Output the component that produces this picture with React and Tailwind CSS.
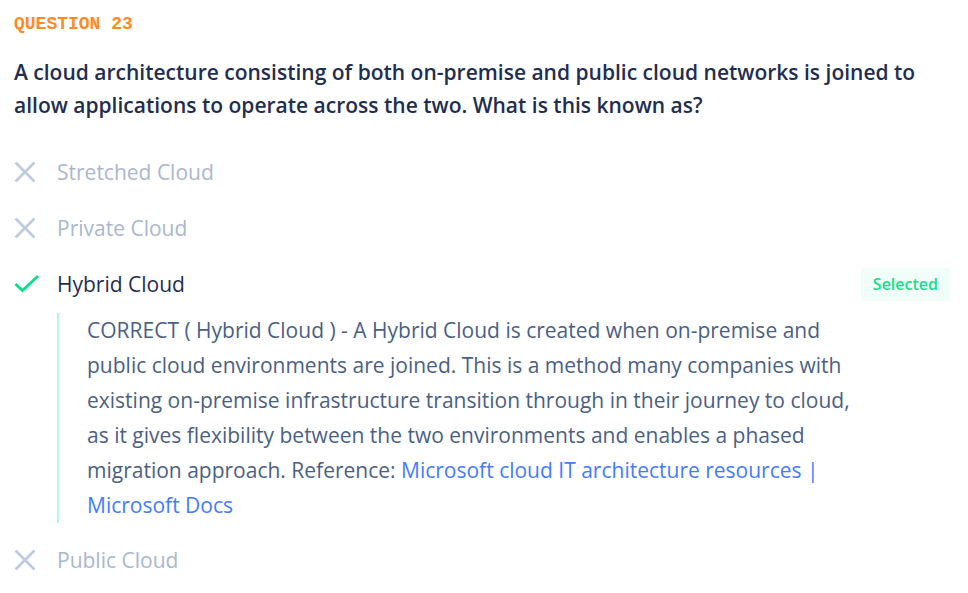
const Cross = () => (
  <svg className="h-6 w-6 shrink-0 text-[#bec9e4]" viewBox="0 0 24 24" fill="none" stroke="currentColor" strokeWidth="2.5" aria-hidden="true">
    <path d="M1.5 1.5 20.5 20.5M20.5 1.5 1.5 20.5" />
  </svg>
);

const Check = () => (
  <svg className="h-6 w-6 shrink-0 overflow-visible text-[#06e187]" viewBox="0 0 24 24" fill="none" stroke="currentColor" strokeWidth="2.8" aria-hidden="true">
    <path d="M1.5 11 8.5 17.5 24 3" />
  </svg>
);

const Option = ({ children }) => (
  <li className="mb-[23px] flex items-center gap-[19px] leading-[33px] text-[#aab7cf]">
    <Cross />
    <span>{children}</span>
  </li>
);

export default function App() {
  return (
    <main className="bg-white px-[14px] pt-3 font-['Open_Sans',sans-serif] text-[21px]">
      <p className="font-['Liberation_Mono',monospace] text-lg leading-6 font-bold text-[#ff8a1f]">QUESTION 23</p>
      <h1 className="mt-5 max-w-[920px] leading-[33px] font-semibold text-[#1f2e50]">
        A cloud architecture consisting of both on-premise and public cloud networks is joined to allow applications to operate across the two. What is this known as?
      </h1>
      <ul className="mt-[34px]">
        <Option>Stretched Cloud</Option>
        <Option>Private Cloud</Option>
        <li className="mb-[21px]">
          <div className="flex items-center gap-[19px] leading-[33px] text-[#1f2e50]">
            <Check />
            <span>Hybrid Cloud</span>
            <span className="mr-1 ml-auto rounded bg-[#f1fdf9] px-3 text-base leading-[33px] font-semibold text-[#14e08a]">Selected</span>
          </div>
          <div className="mt-3 mr-24 ml-[43px] border-l-2 border-[#b9f5e0] pl-7 leading-[35px] text-[#4b5f84]">
            <p>
              CORRECT ( Hybrid Cloud ) - A Hybrid Cloud is created when on-premise and public cloud environments are joined. This is a method many companies with existing on-premise infrastructure transition through in their journey to cloud, as it gives flexibility between the two environments and enables a phased migration approach. Reference:{' '}
              <a href="#docs" className="text-[#447cff]">Microsoft cloud IT architecture resources | Microsoft Docs</a>
            </p>
          </div>
        </li>
        <Option>Public Cloud</Option>
      </ul>
    </main>
  );
}
